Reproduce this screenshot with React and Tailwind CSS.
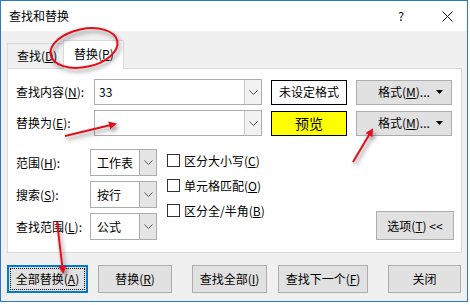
import React from "react";

const U = ({ c }) => <span className="underline">{c}</span>;

const Chevron = () => (
  <svg width="9" height="5" viewBox="0 0 9 5" fill="none">
    <path d="M0.5 0.5 L4.5 4.5 L8.5 0.5" stroke="#555" strokeWidth="1" />
  </svg>
);

const Combo = ({ value, w }) => (
  <div className={`flex h-[26px] border border-[#abadb3] bg-white ${w}`}>
    <div className="flex-1 pl-[4px] flex items-center text-[12px] text-black">{value}</div>
    <div className="w-[17px] border-l border-[#c9c9c9] bg-[#f2f2f2] flex items-center justify-center">
      <Chevron />
    </div>
  </div>
);

const Select = ({ value }) => (
  <div className="flex h-[27px] w-[67px] border border-[#acacac] bg-white">
    <div className="flex-1 pl-[6px] flex items-center text-[12px] text-black">{value}</div>
    <div className="w-[17px] border-l border-[#acacac] bg-[#e5e5e5] flex items-center justify-center">
      <Chevron />
    </div>
  </div>
);

const Btn = ({ children, w, focus }) => (
  <div
    className={`h-[28px] ${w} flex items-center justify-center text-[12px] text-black bg-[#e1e1e1] ${
      focus ? "border-2 border-[#0078d7] p-[1px]" : "border border-[#adadad]"
    }`}
  >
    {focus ? (
      <div className="w-full h-full border border-dotted border-black flex items-center justify-center">
        {children}
      </div>
    ) : (
      children
    )}
  </div>
);

const FormatBtn = () => (
  <div className="h-[25px] w-[96px] flex items-center bg-[#e1e1e1] border border-[#adadad] text-[12px] text-black">
    <span className="ml-[21px]">
      格式(<U c="M" />)...
    </span>
    <svg className="ml-auto mr-[8px]" width="7" height="4" viewBox="0 0 7 4">
      <path d="M0 0 H7 L3.5 4 Z" fill="#000" />
    </svg>
  </div>
);

const Check = ({ children }) => (
  <div className="flex items-center h-[25px]">
    <div className="w-[13px] h-[13px] border border-[#333] bg-white" />
    <span className="ml-[4px] text-[12px] text-black">{children}</span>
  </div>
);

export default function App() {
  return (
    <div
      className="w-[470px] h-[305px] bg-white relative overflow-hidden"
      style={{ fontFamily: '"Noto Sans CJK SC", "Noto Sans", sans-serif' }}
    >
      <div className="w-[468px] h-[302px] border border-[#2b78d0] bg-[#f0f0f0] flex flex-col">
        {/* title bar */}
        <div className="h-[30px] bg-white flex items-center pl-[8px] text-[12px] text-black">
          <span>查找和替换</span>
          <span className="ml-auto mr-[38px] text-[12px]">?</span>
          <svg className="mr-[14px]" width="11" height="11" viewBox="0 0 11 11">
            <path d="M0.5 0.5 L10.5 10.5 M10.5 0.5 L0.5 10.5" stroke="#111" strokeWidth="1" />
          </svg>
        </div>

        {/* tabs */}
        <div className="mt-[9px] ml-[6px] flex items-end h-[28px] relative z-10">
          <div className="h-[25px] w-[57px] border border-b-0 border-[#d9d9d9] bg-[#f0f0f0] flex items-center pl-[9px] text-[12px] text-black">
            查找(<U c="D" />)
          </div>
          <div className="h-[29px] w-[61px] -ml-[1px] border border-b-0 border-[#d9d9d9] bg-white flex items-center pl-[10px] pb-[3px] text-[12px] text-black relative top-[1px]">
            替换(<U c="P" />)
          </div>
        </div>

        {/* panel */}
        <div className="ml-[6px] w-[455px] h-[185px] border border-[#d9d9d9] bg-white flex flex-col pl-[8px] pt-[10px]">
          <div className="flex items-center">
            <div className="w-[78px] text-[12px] text-black">
              查找内容(<U c="N" />):
            </div>
            <Combo value="33" w="w-[168px]" />
            <div className="ml-[9px] w-[76px] h-[25px] border border-black bg-white flex items-center justify-center text-[12px] text-black">
              未设定格式
            </div>
            <div className="ml-[9px]">
              <FormatBtn />
            </div>
          </div>
          <div className="flex items-center mt-[5px]">
            <div className="w-[78px] text-[12px] text-black">
              替换为(<U c="E" />):
            </div>
            <Combo value="" w="w-[168px]" />
            <div className="ml-[9px] w-[76px] h-[25px] border border-black bg-[#ffff00] flex items-center justify-center text-[14px] text-black">
              预览
            </div>
            <div className="ml-[9px]">
              <FormatBtn />
            </div>
          </div>

          <div className="flex mt-[13px]">
            <div className="flex flex-col gap-[5px]">
              <div className="flex items-center">
                <div className="w-[74px] text-[12px] text-black">
                  范围(<U c="H" />):
                </div>
                <Select value="工作表" />
              </div>
              <div className="flex items-center">
                <div className="w-[74px] text-[12px] text-black">
                  搜索(<U c="S" />):
                </div>
                <Select value="按行" />
              </div>
              <div className="flex items-center">
                <div className="w-[74px] text-[12px] text-black">
                  查找范围(<U c="L" />):
                </div>
                <Select value="公式" />
              </div>
            </div>
            <div className="ml-[10px] flex flex-col mt-[-1px]">
              <Check>
                区分大小写(<U c="C" />)
              </Check>
              <Check>
                单元格匹配(<U c="O" />)
              </Check>
              <Check>
                区分全/半角(<U c="B" />)
              </Check>
            </div>
            <div className="ml-auto mr-[7px] self-end">
              <div className="h-[29px] w-[78px] flex items-center justify-center bg-[#e1e1e1] border border-[#adadad] text-[12px] text-black">
                选项(<U c="T" />) &lt;&lt;
              </div>
            </div>
          </div>
        </div>

        {/* bottom buttons */}
        <div className="flex mt-[12px] ml-[6px]">
          <Btn w="w-[81px]" focus>
            全部替换(<U c="A" />)
          </Btn>
          <div className="ml-[10px]">
            <Btn w="w-[74px]">
              替换(<U c="R" />)
            </Btn>
          </div>
          <div className="ml-[20px]">
            <Btn w="w-[75px]">
              查找全部(<U c="I" />)
            </Btn>
          </div>
          <div className="ml-[11px]">
            <Btn w="w-[90px]">
              查找下一个(<U c="F" />)
            </Btn>
          </div>
          <div className="ml-[20px]">
            <Btn w="w-[73px]">关闭</Btn>
          </div>
        </div>
      </div>

      {/* annotations */}
      <svg className="absolute inset-0 pointer-events-none z-20" width="470" height="305" viewBox="0 0 470 305">
        <defs>
          <filter id="sh" x="-50%" y="-50%" width="200%" height="200%">
            <feDropShadow dx="2" dy="3" stdDeviation="2" floodColor="#000" floodOpacity="0.45" />
          </filter>
          <marker id="ah" markerWidth="8" markerHeight="8" refX="6" refY="4" orient="auto" markerUnits="userSpaceOnUse">
            <path d="M0 0 L8 4 L0 8 Z" fill="#e3101c" />
          </marker>
        </defs>
        <g filter="url(#sh)">
          <ellipse cx="84" cy="48" rx="34" ry="19" transform="rotate(-12 84 48)" fill="none" stroke="#e3101c" strokeWidth="2" />
          <line x1="65" y1="136" x2="115" y2="124" stroke="#e3101c" strokeWidth="2" markerEnd="url(#ah)" />
          <line x1="353" y1="162" x2="372" y2="130" stroke="#e3101c" strokeWidth="2" markerEnd="url(#ah)" />
          <line x1="57" y1="222" x2="63" y2="272" stroke="#e3101c" strokeWidth="2" markerEnd="url(#ah)" />
        </g>
      </svg>
    </div>
  );
}
